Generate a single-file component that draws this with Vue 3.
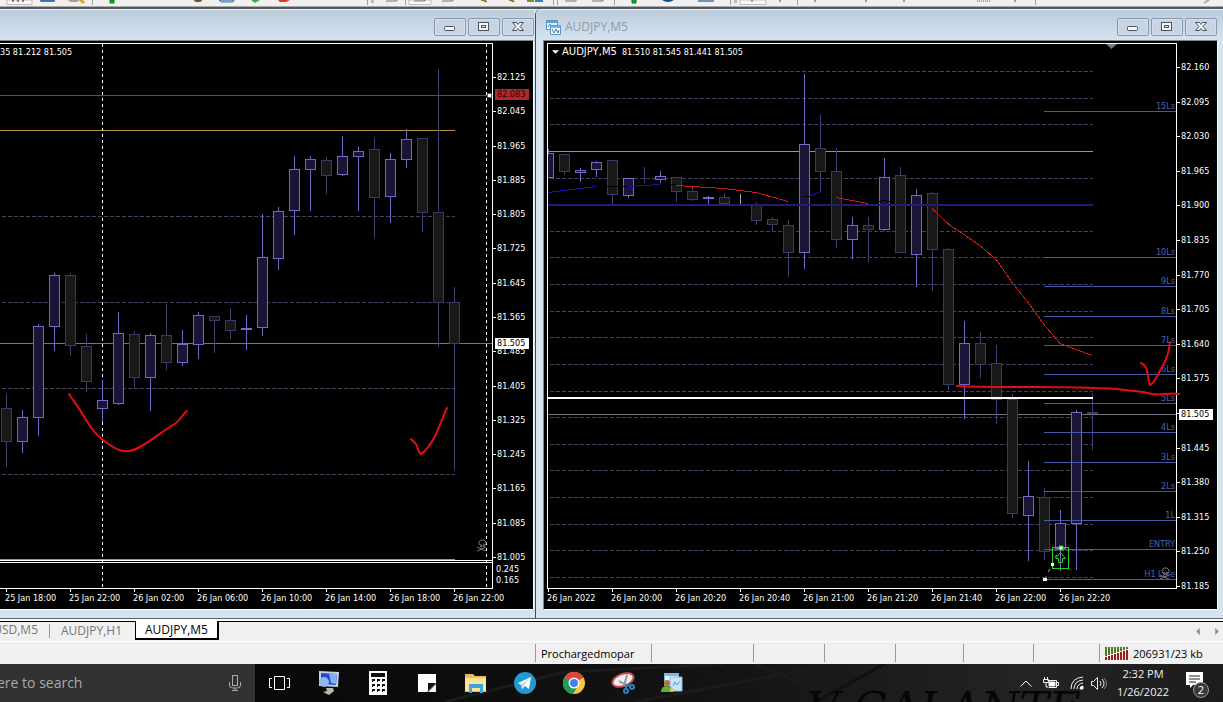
<script setup>
const toCandles = (rows) =>
  rows.map(([x, type, high, open, close, low]) => ({ x, type, high, open, close, low }))

// x, direction, wick top, body top, body bottom, wick bottom
const leftCandles = toCandles([
  [6, 'bear', 394, 408, 441, 467], [22, 'bull', 410, 417, 441, 453], [38, 'bull', 324, 326, 417, 436],
  [54, 'bull', 273, 275, 326, 351], [70, 'bear', 273, 275, 345, 356], [86, 'bear', 334, 346, 381, 392],
  [102, 'bull', 380, 400, 408, 422], [118, 'bull', 312, 333, 403, 405], [134, 'bear', 331, 334, 377, 388],
  [150, 'bull', 333, 335, 377, 411], [166, 'bear', 304, 335, 362, 370], [182, 'bull', 330, 344, 362, 366],
  [198, 'bull', 312, 315, 344, 359], [214, 'bear', 316, 316, 320, 353], [230, 'bear', 308, 320, 330, 339],
  [246, 'bull', 315, 328, 329, 350], [262, 'bull', 214, 257, 327, 336], [278, 'bull', 207, 211, 258, 270],
  [294, 'bull', 156, 169, 210, 235], [310, 'bull', 156, 159, 169, 211], [326, 'bear', 157, 160, 175, 194],
  [342, 'bull', 136, 156, 174, 176], [358, 'bull', 147, 151, 156, 211], [374, 'bear', 138, 149, 197, 238],
  [390, 'bull', 153, 159, 196, 223], [406, 'bull', 129, 139, 159, 168], [422, 'bear', 138, 138, 212, 232],
  [438, 'bear', 69, 212, 302, 347], [454, 'bear', 287, 302, 343, 470]
])
const rightCandles = toCandles([
  [548, 'bull', 149, 153, 177, 178], [564, 'bear', 154, 154, 171, 175], [580, 'bull', 168, 170, 172, 182],
  [596, 'bull', 161, 162, 169, 177], [612, 'bear', 160, 160, 194, 205], [628, 'bull', 178, 178, 195, 198],
  [644, 'bear', 167, 179, 179, 183], [660, 'bull', 171, 176, 179, 183], [676, 'bear', 177, 177, 191, 202],
  [692, 'bear', 187, 191, 199, 201], [708, 'bull', 196, 197, 198, 204], [724, 'bear', 193, 197, 203, 204],
  [756, 'bear', 202, 205, 220, 225], [772, 'bear', 217, 219, 224, 232], [788, 'bear', 220, 225, 252, 277],
  [804, 'bull', 74, 144, 252, 269], [820, 'bear', 114, 148, 171, 192], [836, 'bear', 148, 171, 239, 248],
  [852, 'bull', 217, 225, 239, 259], [868, 'bear', 217, 225, 229, 262], [884, 'bull', 158, 177, 229, 231],
  [900, 'bear', 167, 175, 252, 253], [916, 'bull', 189, 195, 254, 287], [932, 'bear', 192, 193, 249, 291],
  [948, 'bear', 248, 249, 384, 390], [964, 'bull', 321, 343, 384, 419], [980, 'bear', 332, 343, 364, 378],
  [996, 'bear', 345, 363, 399, 424], [1012, 'bear', 394, 399, 513, 518], [1028, 'bull', 461, 496, 515, 561],
  [1044, 'bear', 488, 497, 551, 560], [1060, 'bull', 510, 523, 548, 571], [1076, 'bull', 410, 412, 523, 570],
  [1092, 'bear', 393, 412, 413, 450]
])

const priceRange = (from, step, count) =>
  Array.from({ length: count }, (_, i) => (from - step * i).toFixed(3))
const leftPrices = priceRange(82.125, 0.08, 15)
const rightPrices = priceRange(82.16, 0.065, 16)

const leftTimes = ['25 Jan 18:00', '25 Jan 22:00', '26 Jan 02:00', '26 Jan 06:00', '26 Jan 10:00', '26 Jan 14:00', '26 Jan 18:00', '26 Jan 22:00']
const rightTimes = ['26 Jan 2022', '26 Jan 20:00', '26 Jan 20:20', '26 Jan 20:40', '26 Jan 21:00', '26 Jan 21:20', '26 Jan 21:40', '26 Jan 22:00', '26 Jan 22:20']

const leftGrid = [216, 302, 388, 474]
const rightGrid = [71, 98, 124, 178, 231, 257, 284, 311, 337, 364, 391, 417, 444, 470, 497, 524, 550, 577]
const levels = [
  ['15Ls', 111], ['10Ls', 257], ['9Ls', 286], ['8Ls', 316], ['7Ls', 345], ['6Ls', 374], ['5Ls', 403],
  ['4Ls', 432], ['3Ls', 462], ['2Ls', 491], ['1L', 520], ['ENTRY', 549], ['H1 Line', 579]
]
const separators = [92, 367, 405, 553, 557, 614, 730, 797, 1035]
const signal = Array.from({ length: 8 }, (_, i) => ({ x: i * 3, split: 10 - i }))
const blankCells = [1, 2, 3, 4, 5, 6]
</script>

<template>
  <div class="page">
    <header class="toolbar">
      <svg class="toolbar-icons" viewBox="0 0 1223 6" preserveAspectRatio="xMinYMin slice" aria-hidden="true">
        <rect v-for="x in separators" :key="x" :x="x" y="0" width="1" height="5" fill="#a0a0a0" />
        <path d="M7 0v4.500h25V0z M740 0v4.500h26V0z M409 0v4.500h22V0z" fill="#fafafa" stroke="#bdbdbd" />
        <path d="M13 2V0m5 2V0m5 2V0" stroke="#9a7060" stroke-width="2" />
        <path d="M40 0h15v1l-1 1H41l-1-1z" fill="#4670a8" />
        <path d="M68 0h10v2h-8z" fill="#a9a090" /><path d="M78 0h5l2 2-2 2z" fill="#d8ac18" />
        <path d="M110 0h4v3h-4zM632 0h4v3h-4z" fill="#18b030" stroke="#087818" />
        <ellipse cx="198" cy="0" rx="4" ry="2" fill="#765020" />
        <path d="M219 0h15v1l-2 1h-11z" fill="#a8cde8" stroke="#4874a0" />
        <path d="M251 0h9l-5 3z" fill="#48a850" /><path d="M278 0h12l-4 2h-6z" fill="#d8421b" />
        <path d="M371 0h3M371 2h3M734 0h3M734 2h3" stroke="#888" />
        <path d="M386 1h11V0m17 1h11V0m17 1h11V0m112 1h11V0m16 1h11V0" fill="none" stroke="#777" />
        <path d="M481 0h4l2 2zM509 0h4l1 2z" fill="#c7a22c" stroke="#907010" />
        <path d="M527 0h7v2h-7z" fill="#6b9b2e" /><path d="M535 0h8v2h-8z" fill="#397cb8" />
        <path d="M662 0h12q-6 4-12 0" fill="#184c80" /><path d="M698 0h16v2h-16z" fill="#7094b4" />
        <path d="M752 0v2M780 0v2M815 0v2M866 0v2M904 0v2M1015 0v2" stroke="#444" />
        <path d="M977 1h13" stroke="#555" stroke-dasharray="1 1" /><path d="M1204 3l5-3" stroke="#aaa" stroke-width="2" />
      </svg>
    </header>

    <main class="workspace">
      <section class="window window-left" aria-label="AUDJPY M5 chart, left">
        <div class="titlebar">
          <div class="window-buttons">
            <button type="button" aria-label="Minimize"><svg viewBox="0 0 32 18"><rect x="10.500" y="8.500" width="10" height="4" rx="1" /></svg></button>
            <button type="button" aria-label="Restore"><svg viewBox="0 0 32 18"><rect x="10.500" y="4.500" width="10" height="8" /><rect x="13.500" y="7.500" width="4" height="2" /></svg></button>
            <button type="button" aria-label="Close"><svg viewBox="0 0 32 18"><path d="M10.500 4.500h4l1.500 2 1.500-2h4l-3.500 4 3.500 4h-4l-1.500-2-1.500 2h-4l3.500-4z" /></svg></button>
          </div>
        </div>
        <div class="frame">
          <div class="plot">
            <p class="quote">35 81.212 81.505</p>
            <svg class="drawing" viewBox="0 44 492 544" preserveAspectRatio="xMaxYMin meet">
              <g class="crisp">
                <path v-for="y in leftGrid" :key="y" class="grid" :d="`M2 ${y}.5H455`" />
                <rect class="gold" x="0" y="130" width="455" height="1" />
                <rect class="gold" x="0" y="559" width="455" height="1" />
                <path class="session" d="M102.500 44V588M486.500 44V588" />
                <rect x="0" y="343" width="492" height="1" fill="#77747c" />
                <rect x="0" y="95" width="490" height="1" fill="#a82c30" />
                <g v-for="c in leftCandles" :key="c.x" :class="c.type">
                  <rect class="wick" :x="c.x" :y="c.high" width="1" :height="c.low - c.high" />
                  <rect class="body" :x="c.x - 4.5" :y="c.open + 0.5" width="10" :height="c.close - c.open" />
                </g>
                <path d="M0 560.500H492M0 562.500H492" stroke="#fff" />
                <rect x="487.500" y="93.500" width="4" height="4" fill="#fff" stroke="#a82c30" />
              </g>
              <g class="skull" transform="translate(477 540)"><path d="M2 2l2-2h3l2 2v2L7 6H4L2 4zM0 7l9 4M9 7l-9 4M4 4v3M7 4v3" /></g>
              <path class="pen" d="M69 394C74 402 78 406 83 415C93 432 100 439 110 445C122 453 129 453 140 447C154 439 164 430 176 423C180 420 183 414 187 411" />
              <path class="pen" d="M411 439L416 444C418 448 419 454 421 454C425 452 430 445 434 438C439 429 443 416 447 408" />
            </svg>
          </div>
          <div class="axis axis-left">
            <ul><li v-for="p in leftPrices" :key="p">{{ p }}</li></ul>
            <div class="sub-axis"><span>0.245</span><span>0.165</span></div>
            <span class="tag tag-red">82.083</span>
            <span class="tag tag-left">81.505</span>
          </div>
          <ol class="times times-left"><li v-for="t in leftTimes" :key="t">{{ t }}</li></ol>
        </div>
      </section>

      <section class="window window-right" aria-label="AUDJPY M5 chart, right">
        <div class="titlebar">
          <svg class="title-icon" viewBox="0 0 15 15" aria-hidden="true"><path d="M.5.5h11v9H.5z" fill="#eaf6ff" stroke="#5a94ca" /><path d="M1 1h10v2H1z" fill="#5fa0d8" /><path d="M2 7l2-3 2 3 1-2" fill="none" stroke="#4f88bd" /><path d="M4.500 5.500h10v9h-10z" fill="#f6fcff" stroke="#5a94ca" /><path d="M5 6h9v2H5z" fill="#78b5e4" /><path d="M6 9l2 4 2-4 2 4 1-3" fill="none" stroke="#4b7bb2" /></svg>
          <h2>AUDJPY,M5</h2>
          <div class="window-buttons">
            <button type="button" aria-label="Minimize"><svg viewBox="0 0 32 18"><rect x="10.500" y="8.500" width="10" height="4" rx="1" /></svg></button>
            <button type="button" aria-label="Restore"><svg viewBox="0 0 32 18"><rect x="10.500" y="4.500" width="10" height="8" /><rect x="13.500" y="7.500" width="4" height="2" /></svg></button>
            <button type="button" aria-label="Close"><svg viewBox="0 0 32 18"><path d="M10.500 4.500h4l1.500 2 1.500-2h4l-3.500 4 3.500 4h-4l-1.500-2-1.500 2h-4l3.500-4z" /></svg></button>
          </div>
        </div>
        <div class="frame">
          <div class="plot">
            <p class="quote"><svg viewBox="0 0 8 4" aria-hidden="true"><path d="M0 0h8L4 4z" /></svg><span class="symbol">AUDJPY,M5</span><span>81.510 81.545 81.441 81.505</span></p>
            <svg class="drawing" viewBox="548 44 628 544" preserveAspectRatio="xMaxYMin meet">
              <defs><clipPath id="plot-area"><rect x="548" y="44" width="628" height="544" /></clipPath></defs>
              <g class="crisp" clip-path="url(#plot-area)">
                <path v-for="y in rightGrid" :key="y" class="grid" :d="`M550 ${y}.5H1093`" />
                <rect class="gold" x="548" y="151" width="545" height="1" />
                <rect x="548" y="414" width="628" height="1" fill="#77747c" />
                <rect x="740" y="194" width="1" height="10" fill="#aaa59c" />
                <g v-for="c in rightCandles" :key="c.x" :class="c.type">
                  <rect class="wick" :x="c.x" :y="c.high" width="1" :height="c.low - c.high" />
                  <rect class="body" :x="c.x - 4.5" :y="c.open + 0.5" width="10" :height="c.close - c.open" />
                </g>
                <rect x="548" y="204" width="545" height="2" fill="#201a78" />
                <rect x="548" y="397" width="545" height="2" fill="#fff" />
                <rect v-for="[name, y] in levels" :key="name" x="1044" :y="y" width="132" height="1" fill="#405aa8" />
                <path d="M596 186.500H628M660 184.500H676M804 196.500H810M877 202.500L884 200.500L895 202.500" fill="none" stroke="#000" />
                <path d="M548 192.500L572 189.500L596 186.500M628 186.500L660 184.500M810 195.500L820 192.500" fill="none" stroke="#1414b0" />
                <path d="M676 185.500L724 188.500L756 192.500L788 201.500M836 197.500L868 203.500M932 208.500L950 225.500L964 234.500L981 246.500L997 260.500L1012 282.500L1028 302.500L1044 324.500L1060 343.500L1092 355.500" fill="none" stroke="#c81c18" />
              </g>
              <text v-for="[name, y] in levels" :key="name" class="level" x="1175" :y="y - 2">{{ name }}</text>
              <path d="M1106 44h11l-5.500 5z" fill="#77777b" />
              <g class="skull" transform="translate(1160 568)"><path d="M2 2l2-2h3l2 2v2L7 6H4L2 4zM0 7l9 4M9 7l-9 4M4 4v3M7 4v3" /></g>
              <path d="M1045 579L1052 564L1060 548" stroke="#a6a6c8" stroke-dasharray="3 5" fill="none" />
              <g fill="none" stroke="#20d020"><rect x="1052.500" y="547.500" width="16" height="21" /><path d="M1060.500 552.500l5 6h-3v4h-4v-4h-3z" /></g>
              <path d="M1059 546h4v4h-4z" fill="#c8ffc8" stroke="#20d020" /><rect x="1051" y="563" width="3" height="3" fill="#fff" /><rect x="1043" y="578" width="4" height="3" fill="#fff" />
              <path class="pen" d="M957 386C975 387 1000 387 1030 387C1080 387 1100 388 1117 389C1130 391 1144 391 1152 394C1162 396 1168 392 1179 394" />
              <path class="pen" d="M1141 363C1150 367 1146 376 1150 385C1154 384 1158 374 1162 367C1168 357 1169 350 1170 342" />
            </svg>
          </div>
          <div class="axis axis-right">
            <ul><li v-for="p in rightPrices" :key="p">{{ p }}</li></ul>
            <span class="tag tag-right">81.505</span>
          </div>
          <ol class="times times-right"><li v-for="t in rightTimes" :key="t">{{ t }}</li></ol>
        </div>
      </section>
    </main>

    <nav class="tabs" aria-label="Charts">
      <button type="button" class="tab tab-cut">USD,M5</button>
      <button type="button" class="tab">AUDJPY,H1</button>
      <button type="button" class="tab tab-active">AUDJPY,M5</button>
      <div class="tab-scroll">
        <button type="button" aria-label="Previous tab"><svg viewBox="0 0 4 8"><path d="M4 0v8L0 4z" /></svg></button>
        <button type="button" aria-label="Next tab"><svg viewBox="0 0 4 8"><path d="M0 0v8l4-4z" /></svg></button>
      </div>
    </nav>

    <div class="status">
      <span></span>
      <span class="cell">Prochargedmopar</span>
      <span v-for="n in blankCells" :key="n" class="cell"></span>
      <span class="cell">
        <svg class="signal" viewBox="0 0 24 13" aria-hidden="true">
          <g v-for="b in signal" :key="b.x"><rect :x="b.x" y="0" width="2" :height="b.split - 1" fill="#4f7d20" /><rect :x="b.x" :y="b.split" width="2" :height="13 - b.split" fill="#9c2018" /></g>
        </svg>
        206931/23 kb
      </span>
    </div>

    <footer class="taskbar">
      <svg class="wallpaper" viewBox="0 0 968 38" preserveAspectRatio="xMaxYMid slice" aria-hidden="true">
        <defs><linearGradient id="haze"><stop offset="0" stop-color="#080808" /><stop offset=".5" stop-color="#141414" /><stop offset=".8" stop-color="#242424" /><stop offset="1" stop-color="#1c1c1c" /></linearGradient></defs>
        <rect width="968" height="38" fill="url(#haze)" />
        <path d="M190 38L310 8 470 0M380 38L560 4M500 0L590 38" fill="none" stroke="#1b1b1b" stroke-width="3" />
        <path d="M630 0L560 38" stroke="#101010" stroke-width="3" />
        <text x="552" y="60" class="lettering">V GALANTE</text>
      </svg>
      <label class="search"><input type="text" aria-label="Search" placeholder="ere to search" />
        <svg viewBox="0 0 12 16" aria-hidden="true"><rect x="3.500" y=".5" width="5" height="10" /><path d="M.5 7v3q0 3 3 3h5q3 0 3-3V7M6 13v3M3 15.500h6" /></svg>
      </label>
      <div class="apps">
        <button type="button" aria-label="Task View"><svg viewBox="0 0 24 24"><path d="M6.500 5.500h10v13h-10zM4 7.500H1.500v9H4M19 7.500h2.500v9H19" fill="none" stroke="#fff" /></svg></button>
        <button type="button" aria-label="Remote Desktop"><svg viewBox="0 0 24 24"><path d="M2 0l20 1-1 15-19-1z" fill="#c8d3dc" /><path d="M4 2l16 1-1 11-15-1z" fill="#2446d8" /><path d="M12 3l8 0-1 10-5-1z" fill="#83aef8" /><circle cx="7" cy="11" r="5" fill="#8fb4ee" /><path d="M9 17h7l1 3-5 4-6-3 4-1z" fill="#c0baa4" /></svg></button>
        <button type="button" aria-label="Calculator"><svg viewBox="0 0 24 24"><path d="M3 0h18v24H3z" fill="#fff" /><path d="M5 2h14v4H5zM6 8h3v3H6zM11 8h3v3h-3zM16 8h3v3h-3zM6 13h3v3H6zM11 13h3v3h-3zM16 13h3v3h-3zM6 18h3v3H6zM11 18h3v3h-3zM16 18h3v3h-3z" fill="#111" /><path d="M7 10h2v1H7zM12 10h2v1h-2zM17 10h2v1h-2zM7 15h2v1H7zM12 15h2v1h-2zM17 15h2v1h-2zM7 20h2v1H7zM12 20h2v1h-2zM17 20h2v1h-2z" fill="#fff" /></svg></button>
        <button type="button" aria-label="Sticky Notes"><svg viewBox="0 0 24 24"><path d="M3 3h18v9l-9 9H3z" fill="#fff" /><path d="M13 12h8l-8 8z" fill="#111" /><path d="M21 13v8h-8z" fill="#f4f4f4" /></svg></button>
        <button type="button" aria-label="File Explorer"><svg viewBox="0 0 24 24"><path d="M1 3h8l2 2h11v16H1z" fill="#e8bf57" /><path d="M1 7h21v13H1z" fill="#ffe394" /><path d="M5 13h14v9h-3v-5H8v5H5z" fill="#3ba6de" /></svg></button>
        <button type="button" aria-label="Telegram"><svg viewBox="0 0 24 24"><circle cx="12" cy="12" r="11" fill="#229bd4" /><path d="M5 12l13-6-2 12-4-3-3 3-1-4z" fill="#fff" /><path d="M8 14l8-6-6 7-1 3z" fill="#a8cfe4" /></svg></button>
        <button type="button" aria-label="Chrome"><svg viewBox="0 0 24 24"><circle cx="12" cy="12" r="11" fill="#f2c83d" /><path d="M12 12L2.500 6.500a11 11 0 0 1 19 0z" fill="#db4439" /><path d="M2.500 6.500a11 11 0 0 0 8.500 16.500l5-8-4-3z" fill="#219b58" /><circle cx="12" cy="12" r="5.500" fill="#fff" /><circle cx="12" cy="12" r="4" fill="#4580e8" /></svg></button>
        <button type="button" aria-label="Snipping Tool"><svg viewBox="0 0 24 24"><ellipse cx="12" cy="9" rx="11" ry="6" transform="rotate(-20 12 9)" fill="#f1eeee" stroke="#c94a50" stroke-width="2" /><path d="M13 15L16 4M15 14L8 10" stroke="#8c98a2" stroke-width="2" /><g fill="none" stroke="#2b81b9" stroke-width="2"><circle cx="15" cy="20" r="2" /><circle cx="21" cy="16" r="2" /><path d="M15 18v-4l4 1" /></g></svg></button>
        <button type="button" aria-label="Trading terminal"><svg viewBox="0 0 24 24"><path d="M4 2h15v13H4z" fill="#79b9e4" /><path d="M5 5h13v9H5z" fill="#e6f4ff" /><path d="M10 6h12v14H10z" fill="#c8e4fa" stroke="#8dbbe0" /><path d="M13 15l2-4 2 3 3-4" fill="none" stroke="#58a0d3" /><circle cx="7" cy="12" r="3" fill="#b87336" /><path d="M1 21q0-6 6-6t6 6z" fill="#69ae3a" /><circle cx="12" cy="19" r="2" fill="#ecc45d" /></svg></button>
      </div>
      <div class="tray">
        <svg class="chevron" viewBox="0 0 12 7"><path d="M.5 6.500L6 1l5.500 5.500" /></svg>
        <svg class="battery" viewBox="0 0 16 12"><path d="M4.500 3.500h9v7h-8M13.500 5.500h2v3h-2M1.500 0v3M4.500 0v3M.5 2.500h5v3h-5zM3 6v4h2" /><path d="M6 5h6v4H6z" fill="#fff" /></svg>
        <svg class="wifi" viewBox="0 0 14 14"><path d="M1 13Q1 2 13 1M4 13Q4 5 13 4M7 13Q7 8 13 7" /><path d="M10 13q0-3 3-3v3z" fill="#fff" /></svg>
        <svg class="sound" viewBox="0 0 16 13"><path d="M.5 4.500h2l4-4v12l-4-4h-2zM9 4q2 2.500 0 5M11 2q4 4.500 0 9" /><path d="M13 1q5 5.500 0 11" opacity=".5" /></svg>
        <time class="clock" datetime="2022-01-26T14:32"><span>2:32 PM</span><span>1/26/2022</span></time>
        <button type="button" class="notices" aria-label="Notifications"><svg viewBox="0 0 17 16"><path d="M0 0h17v13H7l-3 3v-3H0z" fill="#fff" /><path d="M3 4h11M3 7h11M3 10h7" stroke="#222" /></svg><span class="count">2</span></button>
      </div>
    </footer>
  </div>
</template>

<style>
html, body, #app { height: 100%; margin: 0; }
body { overflow: hidden; }
</style>

<style scoped>
.page { height: 100%; display: flex; flex-direction: column; background: #f0f0f0; font-family: "Open Sans", "Noto Sans", sans-serif; font-size: 12px; }
.page * { box-sizing: border-box; }
button { border: 0; padding: 0; margin: 0; background: none; font: inherit; color: inherit; }
p, ul, ol, h2 { margin: 0; padding: 0; list-style: none; font-weight: 400; }
svg { display: block; flex: none; }
.toolbar { flex: none; height: 9px; overflow: hidden; border-bottom: 2px solid #50575e; background: #f0f0f0; box-shadow: inset 0 -1px #aaa; }
.toolbar-icons { width: 100%; height: 6px; }
.workspace { flex: 1; min-height: 0; display: grid; grid-template: minmax(0, 1fr) / 535fr 688fr; background: #d7e4f0; border-bottom: 1px solid #5b626a; }
.window { display: flex; flex-direction: column; min-width: 0; min-height: 0; padding-bottom: 8px; background: #d7e4f0; }
.window-left { padding-right: 1px; }
.window-right { padding: 0 5px 8px 7px; border-left: 1px solid #414a55; border-top-left-radius: 6px; }
.titlebar { flex: none; height: 31px; display: flex; align-items: center; border-top: 1px solid #edf3f8; background: linear-gradient(#bdccda, #d5e3f0); padding-top: 4px; }
.window-right .titlebar { margin: 0 -5px 0 -7px; padding: 4px 6px 0 10px; border-top-left-radius: 6px; }
.title-icon { width: 15px; height: 15px; }
h2 { margin-left: 4px; font-size: 12px; line-height: 18px; color: #909ba6; }
.window-buttons { margin-left: auto; display: flex; gap: 2px; }
.window-buttons button { width: 32px; height: 18px; border: 1px solid #8798b0; border-radius: 2px; background: #c7d4e4; box-shadow: inset 0 0 0 1px #d5e0ec; }
.window-buttons svg { width: 32px; height: 18px; margin: -1px; fill: #f4f6f8; stroke: #4b5158; }
.frame { flex: 1; min-height: 0; display: grid; grid-template: minmax(0, 1fr) 20px / minmax(0, 1fr) 40px; padding-top: 2px; background: #000; color: #fff; border: solid #fff; border-width: 1px 1px 1px 0; border-top-color: #7d858d; font: 9px/12px "DejaVu Sans Condensed", "DejaVu Sans", sans-serif; }
.window-right .frame { padding-left: 3px; border-left: 1px solid #7d858d; }
.plot { position: relative; border: solid #fff; border-width: 1px 1px 1px 0; min-width: 0; min-height: 0; }
.window-right .plot { border-left-width: 1px; }
.drawing { width: 100%; height: 100%; overflow: visible; position: relative; z-index: 1; }
.quote { position: absolute; top: 2px; left: 0; display: flex; align-items: center; white-space: pre; }
.window-right .quote { left: 4px; }
.quote svg { width: 7px; height: 4px; margin-right: 3px; fill: #fff; }
.symbol { font: 10px/12px "DejaVu Sans", sans-serif; }
.quote span + span { margin-left: 5px; }
.crisp { shape-rendering: crispEdges; }
.grid { stroke: #454060; stroke-dasharray: 4 2; }
.session { stroke: #fff; stroke-dasharray: 3 3; }
.gold { fill: #bd923f; }
.bull .wick { fill: #7468c8; }
.bull .body { fill: #1c1438; stroke: #7468c8; }
.bear .wick { fill: #443c74; }
.bear .body { fill: #181818; stroke: #3f3864; }
.pen { fill: none; stroke: #e80c12; stroke-width: 2; stroke-linecap: round; stroke-linejoin: round; }
.skull { fill: none; stroke: #77777b; }
.level { fill: #4a64b4; text-anchor: end; font-size: 9px; }
.axis { position: relative; display: flex; flex-direction: column; min-height: 0; }
.axis ul { flex: 1; display: flex; flex-direction: column; justify-content: space-between; }
.axis-left ul { padding-top: 28px; }
.axis-right ul { padding-top: 18px; margin-bottom: -3px; }
.axis li { position: relative; padding-left: 4px; height: 12px; }
.axis li::before { content: ""; position: absolute; left: 0; top: 6px; width: 3px; height: 1px; background: #fff; }
.sub-axis { display: flex; flex-direction: column; line-height: 11px; padding: 1px 0 3px 3px; }
.tag { position: absolute; left: 2px; right: 4px; padding-left: 2px; line-height: 11px; background: #fff; color: #000; }
.tag-red { top: 46px; background: #b0282c; color: #300; }
.tag-left { top: 295px; }
.tag-right { top: 366px; }
.times { grid-column: 1 / -1; display: flex; }
.times-left { padding-left: 5px; }
.times li { position: relative; width: 64px; flex: none; padding-top: 3px; white-space: nowrap; }
.times li::before { content: ""; position: absolute; left: 1px; top: 0; width: 1px; height: 3px; background: #fff; }
.tabs { flex: none; height: 22px; display: flex; border-top: 2px solid #fff; box-shadow: inset 0 1px #000; background: #f0f0f0; }
.tab { padding: 0 13px 0 11px; line-height: 18px; color: #777; }
.tab-cut { width: 50px; display: flex; justify-content: flex-end; padding: 0 11px 0 0; border-right: 1px solid #999; height: 14px; margin-top: 3px; line-height: 12px; }
.tab-active { padding: 0 9px; background: #fff; color: #000; border: solid #000; border-width: 0 2px 2px 1px; height: 19px; line-height: 18px; }
.tab-scroll { margin-left: auto; padding-right: 4px; display: flex; align-items: center; gap: 15px; }
.tab-scroll svg { width: 4px; height: 7px; fill: #8a8a8a; }
.status { flex: none; height: 23px; display: grid; grid-template-columns: 535fr 116fr 102fr 71fr 71fr 68fr 70fr 66fr 124fr; align-items: center; border-top: 1px solid #fff; color: #000; font-size: 11px; }
.cell { height: 18px; display: flex; align-items: center; gap: 4px; padding-left: 5px; border-left: 1px solid #999; min-width: 0; white-space: nowrap; }
.signal { width: 24px; height: 13px; }
.taskbar { flex: none; position: relative; height: 38px; display: flex; background: #0a0a0a; color: #f0f0f0; }
.wallpaper { position: absolute; inset: 0 0 0 255px; width: calc(100% - 255px); height: 38px; }
.lettering { font: italic 44px "DejaVu Serif", serif; fill: #060606; }
.search { width: 255px; display: flex; align-items: center; background: #313131; position: relative; }
.search input { width: 220px; border: 0; padding: 0; margin-left: -3px; background: none; outline: 0; font: 14px/20px "Open Sans", sans-serif; color: #aaa; }
.search input::placeholder { color: #aaa; opacity: 1; }
.search svg { width: 12px; height: 16px; margin: 0 14px 0 12px; fill: none; stroke: #aaa; }
.apps { position: relative; display: flex; align-items: center; }
.apps button { width: 49px; height: 38px; display: grid; place-items: center; }
.apps svg { width: 24px; height: 24px; }
.tray { position: relative; margin-left: auto; display: flex; align-items: center; padding-right: 11px; }
.tray > svg { fill: none; stroke: #f0f0f0; }
.chevron { width: 12px; height: 7px; margin-right: 11px; }
.battery { width: 16px; height: 12px; margin-right: 11px; }
.wifi { width: 14px; height: 14px; margin-right: 7px; }
.sound { width: 16px; height: 13px; margin-right: 9px; }
.clock { width: 54px; display: flex; flex-direction: column; align-items: center; font-size: 11px; line-height: 18px; white-space: nowrap; }
.notices { position: relative; width: 26px; height: 30px; margin-left: 16px; }
.notices svg { width: 17px; height: 16px; margin-top: -6px; }
.count { position: absolute; left: 7px; top: 14px; width: 16px; height: 16px; border-radius: 8px; border: 1px solid #999; background: #3a3a3a; color: #fff; font-size: 11px; line-height: 14px; text-align: center; }
</style>
